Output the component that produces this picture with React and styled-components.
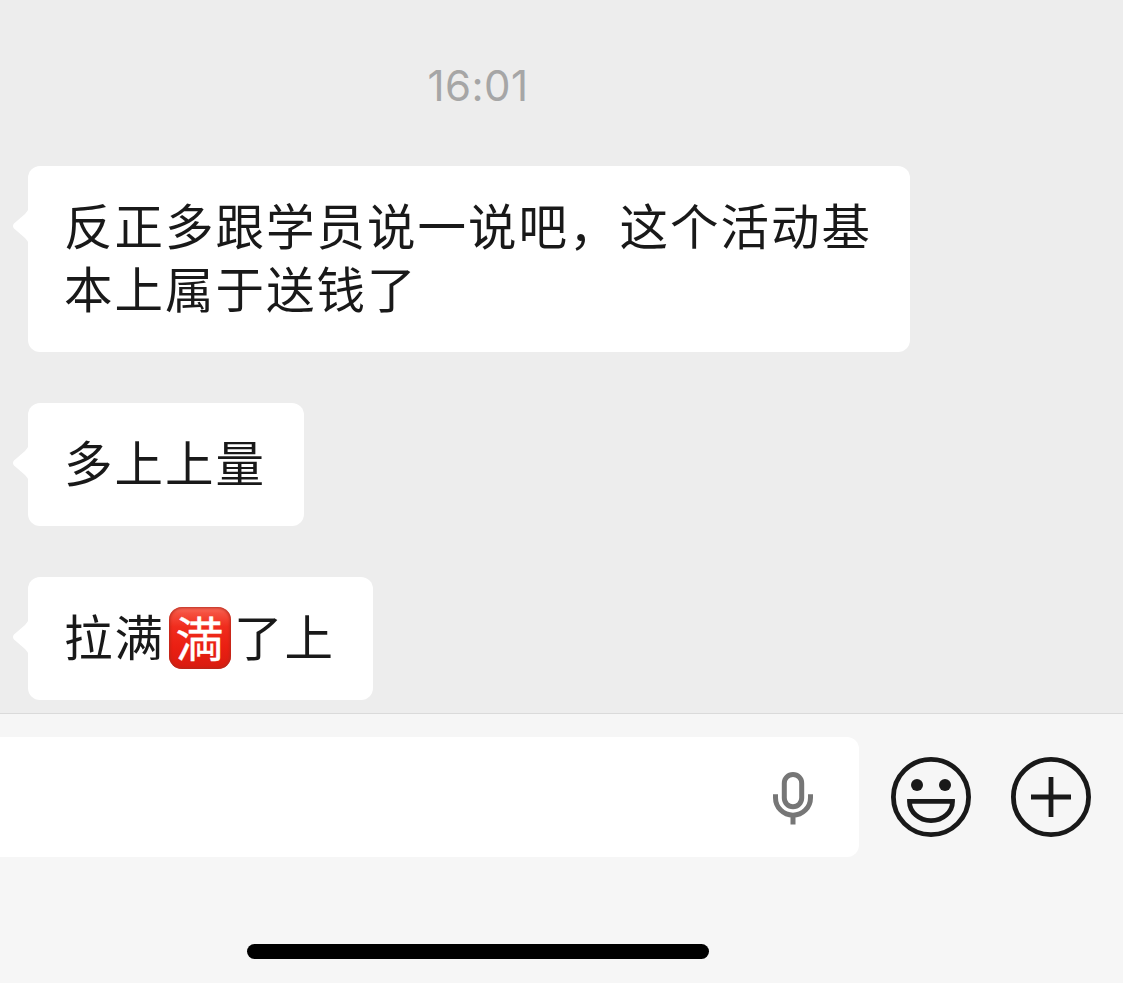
import styled, { createGlobalStyle } from 'styled-components';

const GlobalStyle = createGlobalStyle`
  * {
    box-sizing: border-box;
  }

  body {
    margin: 0;
    background: #ededed;
    font-family: 'Noto Sans CJK SC', sans-serif;
    color: #191919;
  }
`;

const Page = styled.div`
  display: flex;
  flex-direction: column;
  width: 100%;
  height: 983px;
  overflow: hidden;
`;

const Chat = styled.main`
  display: flex;
  flex-direction: column;
  align-items: flex-start;
  height: 713px;
  padding: 61px 28px 0;
`;

const Time = styled.time`
  width: 900px;
  height: 50px;
  margin-bottom: 55px;
  font-family: Inter, sans-serif;
  font-size: 42px;
  line-height: 50px;
  letter-spacing: 0.4px;
  text-align: center;
  color: #a6a6a6;
`;

const Messages = styled.div`
  display: flex;
  flex-direction: column;
  align-items: flex-start;
  gap: 51px;
`;

const Bubble = styled.div`
  position: relative;
  max-width: 882px;
  padding: 27px 38px 33px 36px;
  border-radius: 12px;
  background: #fff;
  font-size: 48.5px;
  line-height: 63px;
  letter-spacing: 2px;
`;

const Tail = styled.svg`
  position: absolute;
  top: 42px;
  left: -16px;
  width: 17px;
  height: 36px;
  fill: #fff;
`;

const FullEmoji = styled.span`
  display: inline-block;
  width: 62px;
  height: 62px;
  margin: 3px 3.5px -2px;
  border-radius: 13px;
  background: linear-gradient(#f9705f 0, #f5503f 10%, #f02c1d 32%, #ea1f12 65%, #d81c10 100%);
  box-shadow: inset 0 0 3px 1px #b5291c;
  font-family: 'Noto Sans CJK JP', sans-serif;
  font-size: 48px;
  font-weight: 400;
  line-height: 58px;
  letter-spacing: 0;
  text-align: center;
  vertical-align: top;
  color: #fff;
  -webkit-text-stroke: 0.4px #fff;
`;

const InputPanel = styled.footer`
  display: flex;
  flex-direction: column;
  height: 270px;
  padding-top: 23px;
  border-top: 1px solid #dadada;
  background: #f6f6f6;
`;

const Toolbar = styled.div`
  display: flex;
  align-items: center;
  height: 120px;
`;

const Field = styled.div`
  display: flex;
  align-items: center;
  justify-content: flex-end;
  width: 859px;
  height: 120px;
  padding-right: 44px;
  border-radius: 0 12px 12px 0;
  background: #fff;
`;

const MicIcon = styled.svg`
  width: 44px;
  height: 56px;
  fill: none;
  stroke: #767676;
  stroke-width: 5;
`;

const IconButton = styled.button`
  width: 80px;
  height: 80px;
  margin-left: ${({ $gap }) => $gap}px;
  padding: 0;
  border: 0;
  background: none;

  svg {
    display: block;
    fill: none;
    stroke: #191919;
    stroke-width: 4.8;
  }
`;

const HomeIndicator = styled.div`
  width: 462px;
  height: 15px;
  margin: 87px 0 0 247px;
  border-radius: 8px;
  background: #000;
`;

const messages = [
  '反正多跟学员说一说吧，这个活动基本上属于送钱了',
  '多上上量',
  <>拉满<FullEmoji>満</FullEmoji>了上</>,
];

const Message = ({ children }) => (
  <Bubble>
    <Tail viewBox="0 0 17 36">
      <path d="M17 0Q15.5 3.5 13 6L2 15.5Q0 18 2 20.5L13 30Q15.5 32.5 17 36Z" />
    </Tail>
    {children}
  </Bubble>
);

const App = () => {
  return (
    <>
      <GlobalStyle />
      <Page>
        <Chat>
          <Time>16:01</Time>
          <Messages>
            {messages.map((message, i) => (
              <Message key={i}>{message}</Message>
            ))}
          </Messages>
        </Chat>

        <InputPanel>
          <Toolbar>
            <Field>
              <MicIcon viewBox="0 0 44 56">
                <rect x="13.3" y="5.5" width="17.4" height="32.2" rx="8.7" />
                <path d="M4.5 25.3v3.4a17.5 17.5 0 0 0 35 0v-3.4M22 46v9.5" />
              </MicIcon>
            </Field>
            <IconButton $gap={32} aria-label="表情">
              <svg width="80" height="80" viewBox="0 0 80 80">
                <circle cx="40" cy="40" r="37.6" />
                <circle cx="26" cy="28" r="6" fill="#191919" stroke="none" />
                <circle cx="54" cy="28" r="6" fill="#191919" stroke="none" />
                <path d="M18.5 44.4h43a21.5 19.2 0 0 1-43 0Z" />
              </svg>
            </IconButton>
            <IconButton $gap={40} aria-label="更多">
              <svg width="80" height="80" viewBox="0 0 80 80">
                <circle cx="40" cy="40" r="37.6" />
                <path d="M40 20v40M20 40h40" />
              </svg>
            </IconButton>
          </Toolbar>
          <HomeIndicator />
        </InputPanel>
      </Page>
    </>
  );
};

export default App;
